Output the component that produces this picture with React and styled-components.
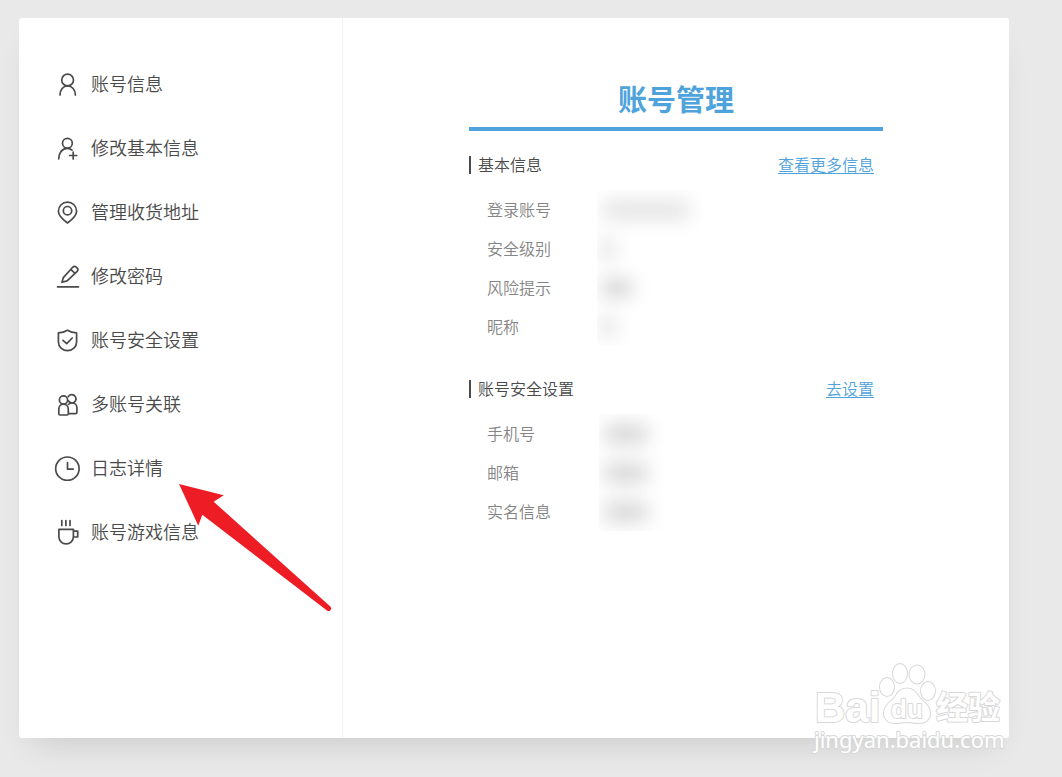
import React from 'react';
import styled, { createGlobalStyle } from 'styled-components';

const GlobalStyle = createGlobalStyle`
  * {
    box-sizing: border-box;
  }

  body {
    margin: 0;
    background-color: #e9e9e9;
    font-family: 'Noto Sans CJK SC', 'Noto Sans', sans-serif;
    font-weight: 350;
    color: #4a4a4a;
  }
`;

const Page = styled.div`
  min-height: 100vh;
  padding: 18px 53px 39px 19px;
`;

const Card = styled.div`
  position: relative;
  display: flex;
  min-height: 720px;
  border-radius: 3px;
  background-color: white;
  box-shadow: 0 18px 32px -14px rgba(0, 0, 0, 0.14);
`;

const Sidebar = styled.nav`
  flex: 0 0 324px;
  padding: 34px 0 0 35px;
  border-right: 1px solid #f2f2f2;
`;

const MenuItem = styled.a`
  display: flex;
  align-items: center;
  gap: 11px;
  height: 64px;
  font-size: 18px;
  color: #4a4a4a;
  text-decoration: none;
`;

const MenuText = styled.span`
  padding-bottom: 2px;
`;

const Icon = styled.svg`
  width: 26px;
  height: 26px;
  fill: none;
  stroke: #4a4a4a;
  stroke-width: 1.7;
  stroke-linecap: round;
  stroke-linejoin: round;
`;

const Main = styled.main`
  flex: 1;
  padding: 58px 126px 0;
`;

const Title = styled.h1`
  margin: 0;
  padding-bottom: 7px;
  border-bottom: 4px solid #4fa3dc;
  font-size: 29px;
  line-height: 44px;
  font-weight: 700;
  text-align: center;
  color: #4fa3dc;
`;

const Section = styled.section`
  margin-top: ${props => (props.$first ? 22 : 30)}px;
`;

const SectionHead = styled.div`
  display: flex;
  align-items: center;
  justify-content: space-between;
  height: 24px;
  padding-right: 9px;
  font-size: 16px;
`;

const SectionTitle = styled.h2`
  height: 18px;
  margin: 0;
  padding-left: 7px;
  border-left: 2px solid #4a4a4a;
  font-size: 16px;
  line-height: 16px;
  font-weight: 350;
`;

const SectionLink = styled.a`
  padding-bottom: 2px;
  color: #4fa3dc;
  text-decoration: underline;
  text-underline-offset: 2px;
`;

const Fields = styled.div`
  display: flex;
  margin-top: 13px;
  padding: 0 0 1px 18px;
`;

const Labels = styled.ul`
  flex: 0 0 ${props => props.$width}px;
  margin: 0;
  padding: 0;
  list-style: none;
`;

const Label = styled.li`
  font-size: 16px;
  line-height: 39px;
  color: #858585;
`;

const Masked = styled.div`
  width: ${props => props.$width}px;
  overflow: hidden;
`;

const MaskedRow = styled.div`
  display: flex;
  align-items: center;
  height: 39px;
  padding-left: 6px;
`;

const MaskedValue = styled.div`
  width: ${props => props.$width}px;
  height: 16px;
  background-color: ${props => props.$color};
  filter: blur(10px);
`;

const Arrow = styled.svg`
  position: absolute;
  left: 160px;
  top: 466px;
  width: 154px;
  height: 130px;
  fill: #ee1c25;
  pointer-events: none;
`;

const Watermark = styled.svg`
  position: absolute;
  right: 0;
  bottom: -20px;
  width: 200px;
  height: 100px;
  fill: white;
  stroke: #d8d8d8;
  stroke-width: 2;
  paint-order: stroke;
  stroke-linejoin: round;
  pointer-events: none;
`;

const BrandText = styled.text`
  font-family: 'Liberation Sans', 'Noto Sans CJK SC', sans-serif;
  font-size: ${props => props.$size}px;
  font-weight: 700;
`;

const SiteText = styled.text`
  font-family: 'Noto Sans', sans-serif;
  font-size: 22px;
  font-weight: 400;
`;

const menu = [
  {
    label: '账号信息',
    icon: (
      <>
        <circle cx="13.6" cy="9" r="5.9" />
        <path d="M6 24c0-5.2 3.2-9.1 7.6-9.1s7.8 3.9 7.8 9.1" />
      </>
    ),
  },
  {
    label: '修改基本信息',
    icon: (
      <>
        <circle cx="13.4" cy="8.3" r="4.9" />
        <path d="M4.7 23.8c0-6 3.5-10.4 8.7-10.4 1.8 0 3.3.6 4.6 1.8M19.2 17v7M15.7 20.5h7" />
      </>
    ),
  },
  {
    label: '管理收货地址',
    icon: (
      <>
        <path d="M13.5 24C9.5 21 4.4 17.3 4.4 12.2a9.1 9.1 0 0 1 18.2 0c0 5.1-5.1 8.8-9.1 11.8z" />
        <circle cx="13.5" cy="11.7" r="4.2" />
      </>
    ),
  },
  {
    label: '修改密码',
    icon: (
      <path d="M3.5 23.8h21M8 19.3l1.3-4.7L18.7 4.3c1-1 2.5-1 3.6-.1l.7.6c1.1 1 1.1 2.4.2 3.5l-10.100 9.600zM16.700 6.400l4.300 4" />
    ),
  },
  {
    label: '账号安全设置',
    icon: (
      <>
        <path d="M13.5 3.3c2.500 1.500 5.500 2.400 9.100 2.600v9c0 5-4.100 8.800-9.100 8.800s-9.100-3.800-9.100-8.800v-9c3.600-.2 6.600-1.100 9.100-2.600z" />
        <path d="M9 13.3l3.7 3.4 5.5-5.7" />
      </>
    ),
  },
  {
    label: '多账号关联',
    icon: (
      <>
        <circle cx="9.5" cy="9" r="4.1" />
        <path d="M14.3 5.500a4.200 4.200 0 1 1 4.100 6.500c-1.900 0-3.300-.8-4.200-2.200" />
        <path d="M6 24c-.8 0-1.200-.5-1.200-1.200v-4.600c0-2.900 2-5 4.700-5s4.800 2.100 4.800 5v4.600c0 .7-.4 1.200-1.200 1.200zM14.500 13.400c1-.9 2.300-1.400 3.800-1.400 2.700 0 4.600 2.100 4.600 5v4.400c0 .8-.5 1.300-1.300 1.300h-7" />
      </>
    ),
  },
  {
    label: '日志详情',
    icon: (
      <>
        <circle cx="13.4" cy="13.7" r="11.7" />
        <path d="M13.5 7.5v6.6h5.7" />
      </>
    ),
  },
  {
    label: '账号游戏信息',
    icon: (
      <path d="M7.8 1.5v5M11.9 1.5v5M16 1.5v5M4.9 10.3h14.5v7.4a7.25 7.25 0 0 1-14.5 0zM19.4 12.2h4.3v5.8h-4.3" />
    ),
  },
];

const basicInfo = [
  { label: '登录账号', width: 86, color: '#dedede' },
  { label: '安全级别', width: 10, color: '#c8c8c8' },
  { label: '风险提示', width: 28, color: '#cacaca' },
  { label: '昵称', width: 10, color: '#c8c8c8' },
];

const securityInfo = [
  { label: '手机号', width: 42, color: '#cccccc' },
  { label: '邮箱', width: 42, color: '#cccccc' },
  { label: '实名信息', width: 42, color: '#cccccc' },
];

const InfoSection = ({ title, link, fields, first, labelWidth, maskWidth }) => {
  return (
    <Section $first={first}>
      <SectionHead>
        <SectionTitle>{title}</SectionTitle>
        <SectionLink href="#">{link}</SectionLink>
      </SectionHead>
      <Fields>
        <Labels $width={labelWidth}>
          {fields.map(field => (
            <Label key={field.label}>{field.label}</Label>
          ))}
        </Labels>
        <Masked $width={maskWidth}>
          {fields.map(field => (
            <MaskedRow key={field.label}>
              <MaskedValue $width={field.width} $color={field.color} />
            </MaskedRow>
          ))}
        </Masked>
      </Fields>
    </Section>
  );
};

const App = () => {
  return (
    <Page>
      <GlobalStyle />
      <Card>
        <Sidebar>
          {menu.map(item => (
            <MenuItem href="#" key={item.label}>
              <Icon viewBox="0 0 26 26">{item.icon}</Icon>
              <MenuText>{item.label}</MenuText>
            </MenuItem>
          ))}
        </Sidebar>
        <Main>
          <Title>账号管理</Title>
          <InfoSection
            first
            title="基本信息"
            link="查看更多信息"
            fields={basicInfo}
            labelWidth={110}
            maskWidth={106}
          />
          <InfoSection
            title="账号安全设置"
            link="去设置"
            fields={securityInfo}
            labelWidth={112}
            maskWidth={68}
          />
        </Main>
        <Arrow viewBox="0 0 154 130">
          <path d="M0 0L44.7 11.2 34.7 17.7 151.3 122.5a2.6 2.6 0 0 1-3 4.2L23.3 30.7 19.3 41.7z" />
        </Arrow>
        <Watermark viewBox="0 0 200 100">
          <BrandText $size={42} x="6" y="64">Bai</BrandText>
          <ellipse cx="78" cy="29" rx="7" ry="9" />
          <ellipse cx="91" cy="15.5" rx="7" ry="9.5" />
          <ellipse cx="108" cy="16.5" rx="7.5" ry="9" />
          <ellipse cx="119" cy="33" rx="7" ry="9" />
          <path d="M98 30.5c6 0 9 4 12 8.5 4 5.5 11 8 11 16 0 7-5 10-11 10-5 0-8-1-12-1s-7 1-12 1c-7 0-11-4-11-10 0-8 7-10.5 11-16 3-4.5 6-8.5 12-8.500z" />
          <BrandText $size={26} x="82" y="60">du</BrandText>
          <BrandText $size={32} x="127" y="61">经验</BrandText>
          <SiteText x="5" y="90">jingyan.baidu.com</SiteText>
        </Watermark>
      </Card>
    </Page>
  );
};

export default App;
